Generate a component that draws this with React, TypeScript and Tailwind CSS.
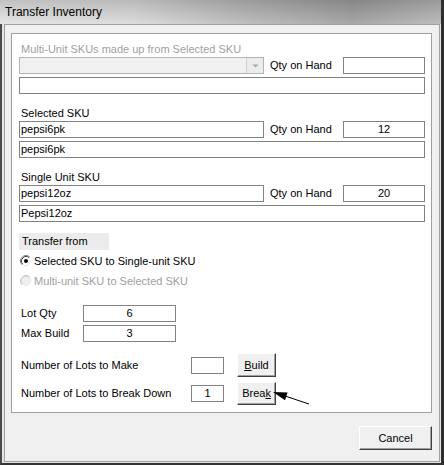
import type { ReactNode } from 'react';

const font = "[font-family:'Liberation_Sans',Arial,sans-serif]";

function Field({ value = '', center = false, className = '' }: { value?: string; center?: boolean; className?: string }) {
  return (
    <div
      className={`h-[17px] shrink-0 border border-[#828282] bg-white px-[1px] text-[11px] leading-[15px] text-black whitespace-nowrap overflow-hidden ${center ? 'text-center' : ''} ${className}`}
    >
      {value}
    </div>
  );
}

function Label({ children, disabled = false }: { children: ReactNode; disabled?: boolean }) {
  return (
    <div className={`h-[16px] pl-[2px] text-[11px] leading-[16px] ${disabled ? 'text-[#a0a0a0]' : 'text-black'}`}>
      {children}
    </div>
  );
}

function QtyLabel() {
  return <div className="ml-[6px] w-[73px] shrink-0 text-[11px] leading-[17px] text-black">Qty on Hand</div>;
}

function ClassicButton({ children, className = '' }: { children: ReactNode; className?: string }) {
  return (
    <div
      className={`flex shrink-0 items-center justify-center border border-t-white border-l-white border-r-[#404040] border-b-[#404040] bg-[#f0f0f0] shadow-[inset_-1px_-1px_0_#a0a0a0] text-[11px] text-black ${className}`}
    >
      {children}
    </div>
  );
}

function Radio({ checked, disabled }: { checked?: boolean; disabled?: boolean }) {
  return (
    <svg width="12" height="12" viewBox="0 0 12 12" className="ml-[1px] shrink-0">
      <circle cx="6" cy="6" r="5" fill={disabled ? '#f0f0f0' : '#ffffff'} />
      <path d="M2.11 9.89 A5.5 5.5 0 0 1 9.89 2.11" fill="none" stroke={disabled ? '#c4c4c4' : '#808080'} strokeWidth="1" />
      <path d="M2.82 9.18 A4.5 4.5 0 0 1 9.18 2.82" fill="none" stroke={disabled ? '#d8d8d8' : '#404040'} strokeWidth="1" />
      <path d="M9.89 2.11 A5.5 5.5 0 0 1 2.11 9.89" fill="none" stroke="#ffffff" strokeWidth="1" />
      <path d="M9.18 2.82 A4.5 4.5 0 0 1 2.82 9.18" fill="none" stroke={disabled ? '#ececec' : '#e3e3e3'} strokeWidth="1" />
      {checked && <circle cx="6" cy="6" r="2" fill="#000000" />}
    </svg>
  );
}

function SkuGroup({ label, sku, qty, desc }: { label: string; sku: string; qty: string; desc: string }) {
  return (
    <div className="flex flex-col">
      <Label>{label}</Label>
      <div className="flex">
        <Field value={sku} className="w-[245px]" />
        <QtyLabel />
        <Field value={qty} center className="w-[82px]" />
      </div>
      <Field value={desc} className="mt-[3px] w-[406px]" />
    </div>
  );
}

export default function App() {
  return (
    <div className={`relative flex h-[465px] w-[444px] flex-col overflow-hidden border-r-[3px] border-r-[#2e2e2e] ${font}`}>
      {/* Title bar */}
      <div className="flex h-[24px] shrink-0 items-center bg-[linear-gradient(to_bottom,rgba(0,0,0,0.14),rgba(255,255,255,0.12)),linear-gradient(to_right,#e2e2e2_0%,#d8d8d8_30%,#b6b6b6_55%,#9c9c9c_80%,#b4b4b4_100%)] pl-[5px]">
        <span className="text-[12px] leading-[16px] text-black">Transfer Inventory</span>
      </div>

      {/* Window frame */}
      <div className="flex flex-1 flex-col border-l-2 border-b-2 border-l-[#4a4a4a] border-b-[#333333] bg-[#e4e4e4] pl-[2px] pr-[1px] pb-[1px]">
        <div className="flex flex-1 flex-col border border-[#a0a0a0] bg-[#f0f0f0] pt-[8px] pl-[6px] pr-[7px]">
          {/* White panel */}
          <div className="flex h-[380px] flex-col border border-[#a0a0a0] bg-white pt-[7px] pl-[7px] pr-[6px]">
            <div className="flex flex-col">
              <Label disabled>Multi-Unit SKUs made up from Selected SKU</Label>
              <div className="flex">
                <div className="flex h-[17px] w-[245px] shrink-0 border border-[#b4b4b4] bg-[#f0f0f0]">
                  <div className="flex-1" />
                  <div className="flex w-[17px] items-center justify-center border-l border-[#d0d0d0] bg-[#ececec]">
                    <svg width="7" height="4" viewBox="0 0 7 4">
                      <path d="M0.5 0.5 L6.5 0.5 L3.5 3.5 Z" fill="#a8a8a8" />
                    </svg>
                  </div>
                </div>
                <QtyLabel />
                <Field className="w-[82px]" />
              </div>
              <Field className="mt-[3px] w-[406px]" />
            </div>

            <div className="mt-[11px]">
              <SkuGroup label="Selected SKU" sku="pepsi6pk" qty="12" desc="pepsi6pk" />
            </div>
            <div className="mt-[11px]">
              <SkuGroup label="Single Unit SKU" sku="pepsi12oz" qty="20" desc="Pepsi12oz" />
            </div>

            {/* Transfer from */}
            <div className="mt-[11px] h-[17px] w-[90px] bg-[#ececec] pl-[3px] text-[11px] leading-[17px] text-black">
              Transfer from
            </div>
            <div className="mt-[3px] flex h-[16px] items-center gap-[2px]">
              <Radio checked />
              <span className="text-[11px] leading-[16px] text-black">Selected SKU to Single-unit SKU</span>
            </div>
            <div className="mt-[4px] flex h-[16px] items-center gap-[2px]">
              <Radio disabled />
              <span className="text-[11px] leading-[16px] text-[#a0a0a0]">Multi-unit SKU to Selected SKU</span>
            </div>

            {/* Lot qty */}
            <div className="mt-[16px] flex">
              <div className="w-[64px] shrink-0 pl-[2px] text-[11px] leading-[17px] text-black">Lot Qty</div>
              <Field value="6" center className="w-[93px]" />
            </div>
            <div className="mt-[3px] flex">
              <div className="w-[64px] shrink-0 pl-[2px] text-[11px] leading-[17px] text-black">Max Build</div>
              <Field value="3" center className="w-[93px]" />
            </div>

            {/* Make / break */}
            <div className="mt-[11px] flex h-[24px] items-center">
              <div className="w-[172px] shrink-0 pl-[2px] text-[11px] leading-[17px] text-black">Number of Lots to Make</div>
              <Field center className="w-[33px]" />
              <ClassicButton className="ml-[13px] h-[24px] w-[39px]">
                <span>
                  <span className="underline">B</span>uild
                </span>
              </ClassicButton>
            </div>
            <div className="mt-[5px] flex h-[23px] items-center">
              <div className="w-[172px] shrink-0 pl-[2px] text-[11px] leading-[17px] text-black">Number of Lots to Break Down</div>
              <Field value="1" center className="w-[33px]" />
              <ClassicButton className="ml-[13px] h-[23px] w-[39px]">
                <span>
                  Brea<span className="underline">k</span>
                </span>
              </ClassicButton>
            </div>
          </div>

          {/* Footer */}
          <div className="mt-[13px] flex justify-end">
            <ClassicButton className="h-[24px] w-[73px]">Cancel</ClassicButton>
          </div>
        </div>
      </div>

      {/* Annotation arrow */}
      <svg className="pointer-events-none absolute left-0 top-0" width="444" height="465" viewBox="0 0 444 465">
        <line x1="309" y1="404" x2="285" y2="396" stroke="#000" strokeWidth="1" />
        <path d="M273 392 L287.6 392.6 L285 400.2 Z" fill="#000" />
      </svg>
    </div>
  );
}
